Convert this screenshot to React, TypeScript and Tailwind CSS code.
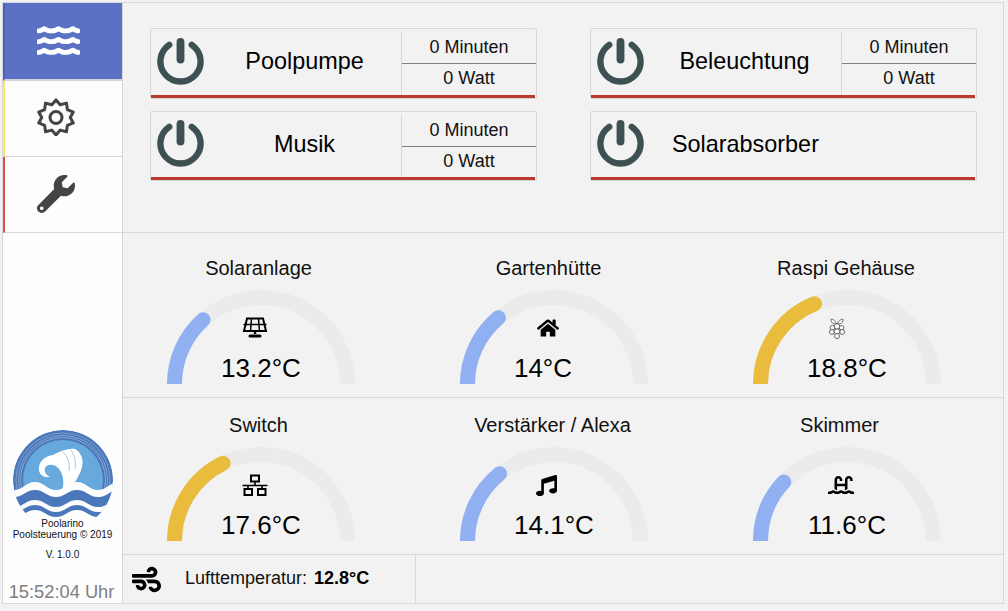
import React from 'react';
import { FaWater, FaWrench, FaHome, FaMusic, FaSwimmingPool, FaWind } from 'react-icons/fa';

const font = "font-['Liberation_Sans',Arial,sans-serif]";

const PowerIcon = () => (
    <svg viewBox="0 0 48 48" className="w-[47px] h-[47px] shrink-0 text-[#3d5153]" fill="none" stroke="currentColor" strokeLinecap="round">
        <path d="M12.500 7A20.500 20.500 0 1 0 35.500 7" strokeWidth="6.500" />
        <path d="M24 4V22" strokeWidth="8" />
    </svg>
);

const GearIcon = () => (
    <svg viewBox="0 0 40 40" className="w-[38px] h-[38px] text-[#444]" fill="none" stroke="currentColor" strokeWidth="3.200" strokeLinejoin="round">
        <path d="M20 2l4.400 5.200 6.600-1.800 1 6.800 6.200 2.600-3.200 5.700 3.200 5.700-6.200 2.600-1 6.800-6.600-1.800-4.400 5.200-4.400-5.200-6.600 1.800-1-6.800-6.200-2.600 3.200-5.700-3.200-5.700 6.200-2.600 1-6.800 6.600 1.800z" />
        <circle cx="20" cy="20.500" r="6.300" />
    </svg>
);

const SolarIcon = () => (
    <svg viewBox="0 0 26 22" className="w-[26px] h-[22px]" fill="none" stroke="black" strokeWidth="2">
        <path d="M5 1.500h16l3 12.500H2z" />
        <path d="M1.500 7.500h23M9.500 1.500l-1 12.500M16.500 1.500l1 12.500" strokeWidth="1.500" />
        <path d="M13 14v3" strokeWidth="2.500" />
        <path d="M8 19h10" strokeWidth="3" strokeLinecap="round" />
    </svg>
);

const NetworkIcon = () => (
    <svg viewBox="0 0 26 22" className="w-[26px] h-[22px]" fill="none" stroke="black" strokeWidth="2">
        <rect x="9" y="1.500" width="8" height="6" />
        <rect x="2.500" y="15" width="7.500" height="6" />
        <rect x="16" y="15" width="7.500" height="6" />
        <path d="M0.500 11.500h25M13 7.500v4M6 11.500V15M20 11.500V15" strokeWidth="1.600" />
    </svg>
);

const RaspberryIcon = () => (
    <svg viewBox="0 0 16 21" className="w-4 h-[21px]" fill="#fdfdfd" stroke="#555" strokeWidth="0.900">
        <path d="M7.600 6C6.500 3 4 .8 2 1.300 1.700 4 4 6.300 7.600 6zM8.400 6C9.500 3 12 .8 14 1.300 14.300 4 12 6.300 8.400 6z" />
        <circle cx="8" cy="8.500" r="2.800" />
        <circle cx="3.400" cy="9.800" r="2.300" />
        <circle cx="12.600" cy="9.800" r="2.300" />
        <circle cx="2.900" cy="14" r="2.400" />
        <circle cx="13.100" cy="14" r="2.400" />
        <circle cx="8" cy="13.600" r="2.800" />
        <circle cx="8" cy="18.100" r="2.500" />
    </svg>
);

// sine like edge with crests at x=22, 64 and troughs at x=1, 43, 85
const wave = (top: number, amp: number) => {
    let d = `M-20 ${top}`;
    for (let x = -20, up = false; x < 106; x += 21, up = !up) {
        const next = up ? top : top + amp;
        const prev = up ? top + amp : top;
        d += ` C${x + 9} ${prev} ${x + 12} ${next} ${x + 21} ${next}`;
    }
    return d;
};

const band = (top: number, bottom: number, amp: number) => {
    let d = wave(top, amp);
    d += ` L106 ${bottom}`;
    for (let x = 106, up = true; x > -20; x -= 21, up = !up) {
        const next = up ? bottom + amp : bottom;
        const prev = up ? bottom : bottom + amp;
        d += ` C${x - 9} ${prev} ${x - 12} ${next} ${x - 21} ${next}`;
    }
    return d + ' Z';
};

const Logo = () => (
    <svg viewBox="0 0 100 88" className="w-[100px] h-[88px] block">
        <defs>
            <clipPath id="logo-circle"><circle cx="50" cy="50" r="50" /></clipPath>
        </defs>
        <g clipPath="url(#logo-circle)">
            <circle cx="50" cy="50" r="50" fill="#4a78ba" />
            <circle cx="50" cy="50" r="47" fill="none" stroke="#a9c4e4" strokeWidth="0.500" />
            <circle cx="50" cy="50" r="44.500" fill="none" stroke="#a9c4e4" strokeWidth="0.600" />
            <circle cx="50" cy="50" r="42.500" fill="none" stroke="#c6d9ee" strokeWidth="0.500" />
            <circle cx="50" cy="50" r="40" fill="#68a9dd" />
            <path d="M37 47C30 48 25 44 26 37 27 30 33 26 40 25 46 22 55 18 62 19 68 22 71 30 69 37 67 46 61 52 57 62L49 62C52 52 50 42 44 37 40 34 34 34 32 38 31 42 33 45 37 47z" fill="#fff" />
            <path d="M50 22C55 27 57 33 56 41M58 20C62 26 63 32 62 39" fill="none" stroke="#9cc4e8" strokeWidth="0.900" />
            <path d={`${wave(52, 8)} L106 100 L-20 100 Z`} fill="#fdfdfd" />
            <path d={band(60, 70, 7)} fill="#4a78ba" />
            <path d={band(75, 80, 7)} fill="#4a78ba" />
        </g>
    </svg>
);

type CardProps = { title: string; stats?: boolean; titleClass?: string; heightClass?: string };

const Card = ({ title, stats = true, titleClass = 'w-[175px] text-center', heightClass = 'h-[71px]' }: CardProps) => (
    <div className={`w-[387px] border border-[#d6d6d6] rounded-[2px] flex flex-col ${heightClass}`}>
        <div className="flex-1 flex items-center min-h-0">
            <div className="w-[66px] pl-[6px] pb-[2px] shrink-0"><PowerIcon /></div>
            <div className={`text-[23.400px] text-black shrink-0 ${titleClass}`}>{title}</div>
            {stats && (
                <div className="flex flex-col w-[135px] h-[63px] mt-[3px] self-start ml-[9px] border-l border-[#d6d6d6] text-[18px] text-[#111] text-center">
                    <div className="h-[32px] border-b border-[#808080] leading-[30px]">0 Minuten</div>
                    <div className="flex-1 leading-[29px]">0 Watt</div>
                </div>
            )}
        </div>
        <div className="h-[3px] mr-[1px] bg-[#b93a2f]" />
    </div>
);

type GaugeProps = {
    label: string;
    value: string;
    angle: number;
    color: string;
    icon: React.ReactNode;
    labelClass?: string;
    iconClass?: string;
    valueClass?: string;
};

const Gauge = ({ label, value, angle, color, icon, labelClass = 'pr-[5px]', iconClass = 'pr-[12px]', valueClass = '' }: GaugeProps) => {
    const r = 86.5;
    const rad = (angle * Math.PI) / 180;
    const x = 94 - r * Math.cos(rad);
    const y = 94 - r * Math.sin(rad);
    return (
        <div className="w-[188px] flex flex-col items-center">
            <div className={`h-[25px] mt-[1px] text-[20px] leading-[25px] text-[#111] whitespace-nowrap ${labelClass}`}>{label}</div>
            <div className="relative w-[188px] h-[94px] mt-[9px]">
                <svg viewBox="0 0 188 94" className="w-[188px] h-[94px]" fill="none" strokeWidth="15">
                    <path d="M7.500 94A86.500 86.500 0 0 1 180.500 94" stroke="#ebebeb" />
                    <path d={`M7.500 94A86.500 86.500 0 0 1 ${x} ${y}`} stroke={color} strokeLinecap="round" />
                </svg>
                <div className={`absolute inset-x-0 top-[26px] h-[24px] flex justify-center items-center text-black ${iconClass}`}>{icon}</div>
                <div className={`absolute inset-x-0 top-[60px] text-center text-[26px] leading-[36px] text-black ${valueClass}`}>{value}</div>
            </div>
        </div>
    );
};

const blue = '#91b0f2';
const yellow = '#e9bc3d';

const App = () => {
    return (
        <div className={`${font} w-[1008px] h-[611px] bg-[#f2f2f2] pt-[2px] pl-[2px] pr-[4px] pb-[7px] overflow-hidden`}>
            <div className="h-full flex border border-[#d8d8d8]">
                <aside className="w-[120px] shrink-0 bg-[#fdfdfd] border-r border-[#d6d6d6] flex flex-col">
                    <div className="h-[78px] bg-[#5b72c4] border-l-2 border-[#4a63c0] flex items-center pl-[32px] pb-[2px] text-white border-b-2 border-b-[#d4d4d4]">
                        <FaWater size={43} />
                    </div>
                    <div className="h-[76px] border-l-2 border-[#f3e96f] border-b border-b-[#d6d6d6] flex items-center pl-[32px] pb-[3px]"><GearIcon /></div>
                    <div className="h-[76px] border-l-2 border-[#d9534f] border-b border-b-[#d6d6d6] flex items-center pl-[32px] pb-[2px] text-[#444]"><FaWrench size={38} /></div>
                    <div className="flex-1 flex flex-col items-center justify-end">
                        <Logo />
                        <div className="text-[10px] leading-[11px] text-center text-[#111]">Poolarino<br />Poolsteuerung © 2019</div>
                        <div className="text-[10px] leading-[11px] text-[#111] mt-[9px]">V. 1.0.0</div>
                        <div className="text-[18.300px] leading-[22px] text-[#808080] mt-[21px] pr-[2px] whitespace-nowrap">15:52:04 Uhr</div>
                    </div>
                </aside>
                <main className="flex-1 flex flex-col">
                    <section className="h-[230px] border-b border-[#d8d8d8] pt-[25px] pl-[27px] grid grid-cols-[387px_387px] gap-x-[53px] content-start gap-y-[12px]">
                        <Card title="Poolpumpe" />
                        <Card title="Beleuchtung" />
                        <Card title="Musik" heightClass="h-[70px]" />
                        <Card title="Solarabsorber" stats={false} titleClass="ml-[15px]" heightClass="h-[70px]" />
                    </section>
                    <section className="h-[165px] border-b border-[#d8d8d8] pt-[22px] pl-[44px] flex gap-[105px]">
                        <Gauge label="Solaranlage" value="13.2°C" angle={48} color={blue} icon={<SolarIcon />} />
                        <Gauge label="Gartenhütte" value="14°C" angle={50} color={blue} icon={<FaHome size={22} />} labelClass="pr-[11px]" valueClass="pr-[22px]" />
                        <Gauge label="Raspi Gehäuse" value="18.8°C" angle={68} color={yellow} icon={<RaspberryIcon />} labelClass="pr-[2px]" iconClass="pr-[20px]" />
                    </section>
                    <section className="h-[157px] border-b border-[#d8d8d8] pt-[14px] pl-[44px] flex gap-[105px]">
                        <Gauge label="Switch" value="17.6°C" angle={64} color={yellow} icon={<NetworkIcon />} />
                        <Gauge label="Verstärker / Alexa" value="14.1°C" angle={51} color={blue} icon={<FaMusic size={21} />} labelClass="pr-[3px]" iconClass="pr-[15px]" />
                        <Gauge label="Skimmer" value="11.6°C" angle={43} color={blue} icon={<FaSwimmingPool size={26} />} labelClass="pr-[15px]" />
                    </section>
                    <section className="flex-1 flex">
                        <div className="w-[293px] border-r border-[#d8d8d8] flex items-center text-[18px] text-[#111]">
                            <FaWind size={29} className="ml-[9px] text-black" />
                            <span className="ml-[24px] pb-[1px] whitespace-nowrap">Lufttemperatur: <b className="ml-[2px] text-black">12.8°C</b></span>
                        </div>
                    </section>
                </main>
            </div>
        </div>
    );
};

export default App;
